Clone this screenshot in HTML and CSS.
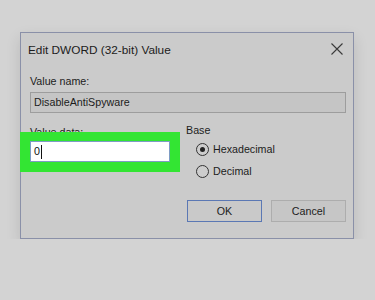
FILE: index.html
```html
<!DOCTYPE html>
<html lang="en">
<head>
  <meta charset="UTF-8" />
  <meta name="viewport" content="width=device-width, initial-scale=1.0" />
  <title>Edit DWORD (32-bit) Value</title>
  <link rel="stylesheet" href="styles.css">
</head>
<body>

  <div class="dialog">
    <div class="titlebar">
      <span class="title">Edit DWORD (32-bit) Value</span>
      <svg class="close" width="12" height="12" viewBox="0 0 12 12">
        <path d="M0.5 0.5 L11.5 11.5 M11.5 0.5 L0.5 11.5" stroke="#3a3a3a" stroke-width="1.1" fill="none" />
      </svg>
    </div>

    <div class="content">
      <div class="label">Value name:</div>
      <div class="field field-name">DisableAntiSpyware</div>

      <div class="row">
        <div class="col-data">
          <div class="label label-data">Value data:</div>
          <div class="highlight">
            <div class="field field-data">0<span class="caret"></span></div>
          </div>
        </div>

        <div class="col-base">
          <div class="label">Base</div>
          <div class="radio"><span class="dot checked"></span>Hexadecimal</div>
          <div class="radio"><span class="dot"></span>Decimal</div>
        </div>
      </div>

      <div class="buttons">
        <div class="btn btn-ok">OK</div>
        <div class="btn">Cancel</div>
      </div>
    </div>
  </div>

</body>
</html>
```

FILE: styles.css
```css
body {
  margin: 0;
  font-family: "Liberation Sans", Arial, sans-serif;
  font-size: 10.7px;
  color: #1c1c1c;
  background-color: #d3d3d3;
}

.dialog {
  margin: 32px 0 0 20px;
  width: 332px;
  border: 1px solid #8a90a8;
  background-color: #cbcbcb;
  box-shadow: 0 6px 14px rgba(0,0,0,0.12);
}

.titlebar {
  height: 34px;
  display: flex;
  align-items: center;
  justify-content: space-between;
  padding: 0 10px 0 7px;
}

.title {
  font-size: 11.8px;
}

.close {
  margin-top: -2px;
}

.content {
  padding: 0 7px 16px 9px;
}

.label {
  line-height: 16px;
  margin-top: 6px;
}

.field {
  height: 19px;
  line-height: 19px;
  padding: 0 3px;
  margin-top: 3px;
}

.field-name {
  border: 1px solid #9d9d9d;
  background-color: #c5c5c5;
}

.row {
  display: flex;
  gap: 16px;
}

.col-data {
  width: 140px;
}

.label-data {
  margin-top: 11px;
}

.highlight {
  position: relative;
  margin: -8px -10px 0 -10px;
  padding: 9px 10px 10px 10px;
  background-color: #33e533;
}

.field-data {
  margin-top: 0;
  border: 1px solid #7e9cc4;
  background-color: #ffffff;
  color: #111;
}

.caret {
  display: inline-block;
  width: 1px;
  height: 14px;
  background-color: #111;
  vertical-align: middle;
  margin-left: 1px;
}

.col-base {
  padding-top: 3px;
}

.col-base .label {
  margin-top: 6px;
}

.radio {
  display: flex;
  align-items: center;
  height: 22px;
  padding-left: 10px;
}

.dot {
  width: 11px;
  height: 11px;
  border: 1px solid #333;
  border-radius: 50%;
  margin-right: 4px;
  position: relative;
  background-color: #cdcdcd;
}

.dot.checked::after {
  content: "";
  position: absolute;
  left: 3px;
  top: 3px;
  width: 5px;
  height: 5px;
  border-radius: 50%;
  background-color: #222;
}

.buttons {
  display: flex;
  justify-content: flex-end;
  gap: 9px;
  margin-top: 18px;
}

.btn {
  width: 73px;
  height: 20px;
  line-height: 20px;
  text-align: center;
  border: 1px solid #adadad;
  background-color: #c6c6c6;
}

.btn-ok {
  border-color: #5b78b4;
  background-color: #c9c9c9;
}
```
